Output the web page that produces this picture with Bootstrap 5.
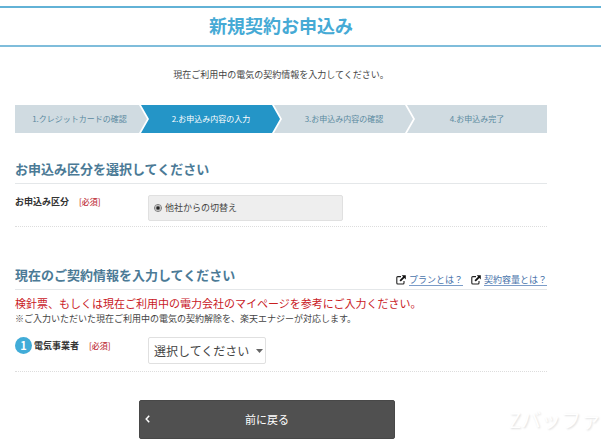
<!DOCTYPE html>
<html lang="ja">
<head>
<meta charset="utf-8">
<meta name="viewport" content="width=device-width, initial-scale=1">
<title>新規契約お申込み</title>
<link href="https://cdn.jsdelivr.net/npm/bootstrap@5.3.0/dist/css/bootstrap.min.css" rel="stylesheet">
<style>
body { font-family: "Noto Sans CJK JP", sans-serif; font-size: 9px; line-height: 14px; color: #444; background: #fff; }
.page-content { padding-left: 15px; padding-right: 54px; }
.page-head { margin-top: 6px; border-top: 2px solid #62b2d6; border-bottom: 2px solid #7fbddb; padding-top: 4px; padding-bottom: 7px; }
.page-title { font-size: 18px; line-height: 26px; font-weight: 700; color: #46aad5; }
.intro { margin-top: 21px; }
.steps { display: grid; grid-template-columns: repeat(4, 1fr); margin-top: 23px; }
.step { background: #d0dbe1; color: #5b8aa0; font-size: 8px; line-height: 28px; text-align: center; margin-left: -7px;
  clip-path: polygon(0 0, calc(100% - 9px) 0, calc(100% - 1px) 50%, calc(100% - 9px) 100%, 0 100%, 8px 50%); }
.step:first-child { margin-left: 0; padding-right: 4px; clip-path: polygon(0 0, calc(100% - 9px) 0, calc(100% - 1px) 50%, calc(100% - 9px) 100%, 0 100%); }
.step:last-child { clip-path: polygon(0 0, 100% 0, 100% 100%, 0 100%, 8px 50%); }
.step.current { background: #2495c7; color: #fff; }
.section-head { border-bottom: 1px solid #e4e7e9; padding-bottom: 4px; margin-top: 26px; }
.section-head.later { margin-top: 38px; }
.section-head h2 { font-size: 13px; line-height: 20px; font-weight: 700; color: #4b7a96; }
.help-links { gap: 8px; font-size: 9px; line-height: 11px; margin-bottom: -1px; }
.help-links a { color: #4a74ab; text-decoration: none; border-bottom: 1px solid #7b9cc8; }
.help-links svg { width: 10px; height: 10px; margin-right: 3px; }
.field-row { padding-top: 11px; padding-bottom: 5px; border-bottom: 1px dotted #ddd; }
.field-row.tall { padding-bottom: 7px; }
.field-name { font-weight: 700; color: #333; }
.required { font-size: 8px; font-weight: 500; color: #c0323c; margin-left: 10px; }
.choice-box { width: 195px; height: 26px; background: #eee; border: 1px solid #e0e0e0; border-radius: 2px; padding-left: 5px; color: #444; }
.choice-box input { appearance: none; width: 8px; height: 8px; margin: 0 3px 0 0; border: 1px solid #777; border-radius: 50%; background: radial-gradient(circle, #222 0 1px, #fff 3px); }
.alert-text { font-size: 11px; line-height: 18px; margin-top: 4px; color: #c9201f; }
.number-dot { width: 17px; height: 17px; border-radius: 50%; background: #41acd8; color: #fff; font-size: 11px; font-weight: 700; margin-right: 2px; }
.field-row.tall .name-cell { line-height: 17px; }
.select-box { width: 118px; position: relative; }
.select-box select { appearance: none; width: 100%; height: 27px; padding: 0 5px; border: 1px solid #e0e0e0; border-radius: 2px; background: #fff; font-size: 12px; line-height: 24px; color: #444; }
.select-box svg { position: absolute; right: 3px; top: 12px; width: 7px; height: 4px; pointer-events: none; }
.back-btn { width: 256px; height: 39px; margin-top: 28px; margin-left: 124px; background: #505050; color: #fff; border: 1px solid #484848; border-radius: 2px; font-size: 11px; padding: 0 10px 2px 5px; }
.back-btn svg { width: 5px; height: 8px; }
.watermark { position: absolute; right: 0; bottom: 6px; font-size: 20px; line-height: 26px; color: #fff; text-shadow: 1px 1px 2px #ddd; }
</style>
</head>
<body class="position-relative">
<header class="page-head">
  <div class="page-content"><h1 class="page-title text-center mb-0">新規契約お申込み</h1></div>
</header>
<main class="page-content">
  <p class="intro text-center mb-0">現在ご利用中の電気の契約情報を入力してください。</p>
  <ol class="steps list-unstyled mb-0">
    <li class="step">1.クレジットカードの確認</li>
    <li class="step current" aria-current="step">2.お申込み内容の入力</li>
    <li class="step">3.お申込み内容の確認</li>
    <li class="step">4.お申込み完了</li>
  </ol>
  <form>
    <div class="section-head"><h2 class="mb-0">お申込み区分を選択してください</h2></div>
    <div class="field-row row g-0">
      <div class="col-3"><span class="field-name">お申込み区分</span><span class="required">[必須]</span></div>
      <div class="col-9">
        <label class="choice-box d-flex align-items-center" for="switch"><input type="radio" id="switch" name="kind" checked>他社からの切替え</label>
      </div>
    </div>
    <div class="section-head later d-flex justify-content-between align-items-end">
      <h2 class="mb-0">現在のご契約情報を入力してください</h2>
      <div class="help-links d-flex">
        <span class="d-flex align-items-center"><svg viewBox="0 0 10 10" aria-hidden="true"><path d="M5 1.6H1.8Q.8 1.6.8 2.6V8Q.8 9 1.8 9H7Q8 9 8 8V6" fill="none" stroke="#222" stroke-width="1.1"/><path d="M5.7.3H9.8V4.4L8.4 3 4.8 6.6 3.5 5.3 7.1 1.7Z" fill="#111"/></svg><a href="#plan">プランとは？</a></span>
        <span class="d-flex align-items-center"><svg viewBox="0 0 10 10" aria-hidden="true"><path d="M5 1.6H1.8Q.8 1.6.8 2.6V8Q.8 9 1.8 9H7Q8 9 8 8V6" fill="none" stroke="#222" stroke-width="1.1"/><path d="M5.7.3H9.8V4.4L8.4 3 4.8 6.6 3.5 5.3 7.1 1.7Z" fill="#111"/></svg><a href="#capacity">契約容量とは？</a></span>
      </div>
    </div>
    <p class="alert-text mb-0">検針票、もしくは現在ご利用中の電力会社のマイページを参考にご入力ください。</p>
    <p class="mb-0">※ご入力いただいた現在ご利用中の電気の契約解除を、楽天エナジーが対応します。</p>
    <div class="field-row tall row g-0">
      <div class="name-cell col-3 d-flex align-items-start">
        <span class="number-dot d-flex align-items-center justify-content-center">1</span><label class="field-name" for="company">電気事業者</label><span class="required">[必須]</span>
      </div>
      <div class="col-9">
        <div class="select-box">
          <select id="company"><option>選択してください</option></select>
          <svg viewBox="0 0 7 4" aria-hidden="true"><path d="M0 0H7L3.5 4Z" fill="#666"/></svg>
        </div>
      </div>
    </div>
    <button type="button" class="back-btn d-flex align-items-center">
      <svg viewBox="0 0 5 8" aria-hidden="true"><path d="M4.2.8 1.2 4 4.2 7.2" fill="none" stroke="#fff" stroke-width="1.5"/></svg>
      <span class="flex-grow-1 text-center">前に戻る</span>
    </button>
  </form>
</main>
<div class="watermark">Zバッファ</div>
<script src="https://cdn.jsdelivr.net/npm/bootstrap@5.3.0/dist/js/bootstrap.bundle.min.js"></script>
</body>
</html>
